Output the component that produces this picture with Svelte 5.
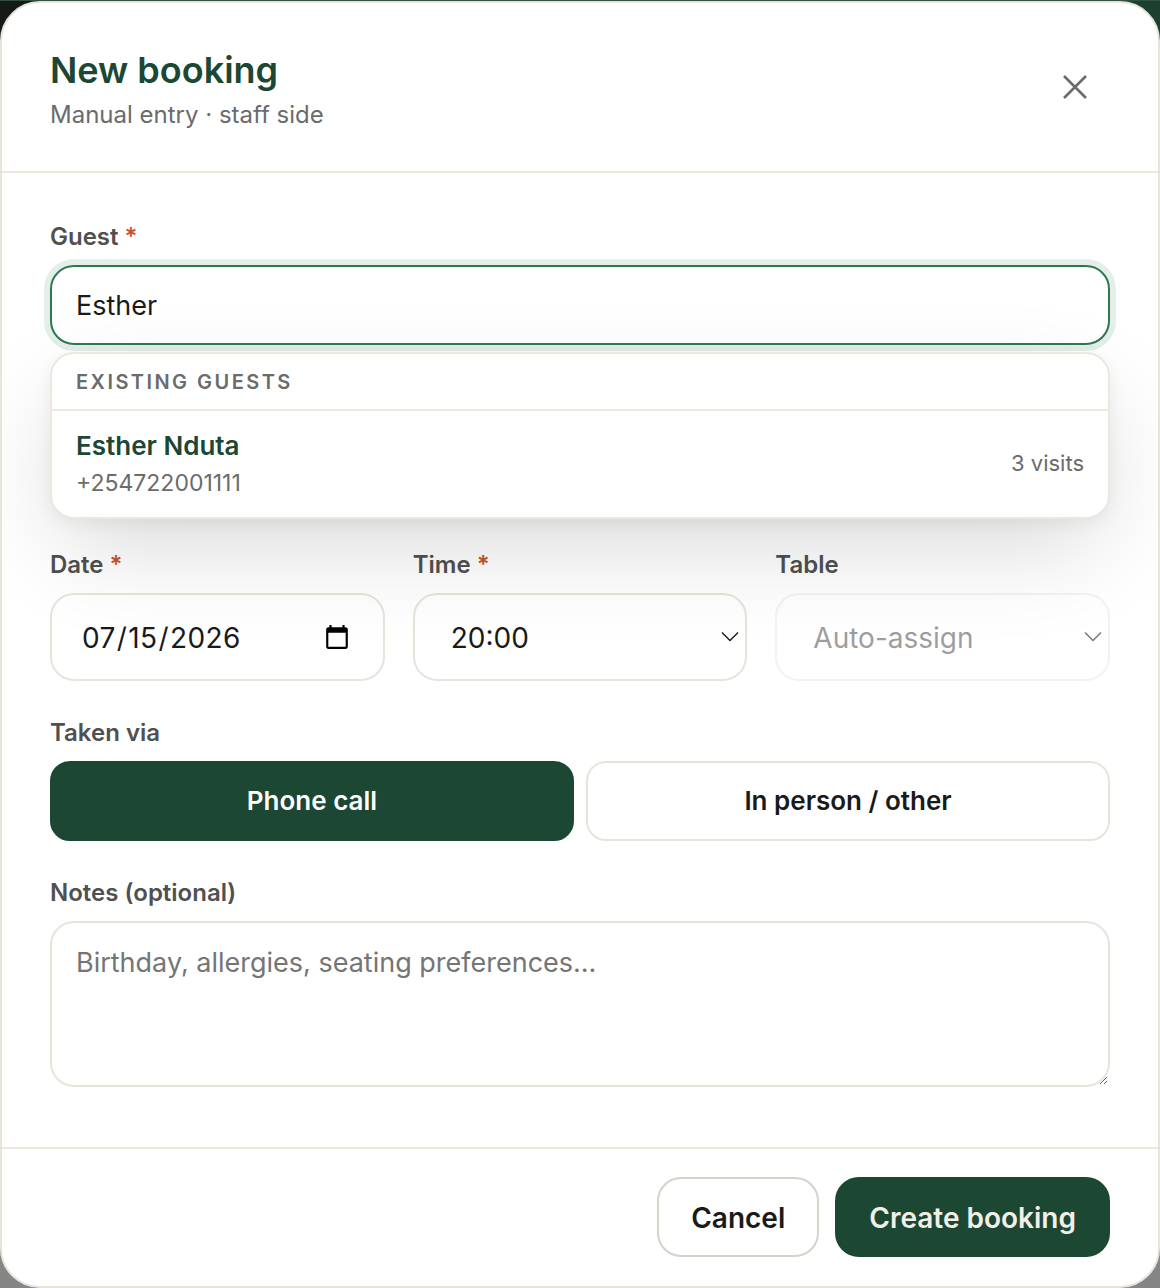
<script>
    let guest = "Esther";
    let date = "2026-07-15";
    let time = "20:00";
    let via = "phone";
    let notes = "";
</script>

<div class="modal">
    <header class="head">
        <div>
            <h2>New booking</h2>
            <p>Manual entry · staff side</p>
        </div>
        <button class="close" aria-label="Close">
            <svg width="28" height="28" viewBox="0 0 28 28" fill="none" stroke="#6b6b6b" stroke-width="2.6">
                <path d="M3 3l22 22M25 3L3 25" />
            </svg>
        </button>
    </header>

    <div class="body">
        <div class="field guest">
            <label for="guest">Guest <span class="req">*</span></label>
            <input id="guest" class="focused" type="text" bind:value={guest} />
            <div class="dropdown">
                <div class="dropdown-head">EXISTING GUESTS</div>
                <div class="match">
                    <div>
                        <div class="match-name">Esther Nduta</div>
                        <div class="match-phone">+254722001111</div>
                    </div>
                    <span class="match-visits">3 visits</span>
                </div>
            </div>
        </div>

        <div class="row3">
            <div class="field">
                <label for="date">Date <span class="req">*</span></label>
                <input id="date" class="big" type="date" bind:value={date} />
            </div>
            <div class="field">
                <label for="time">Time <span class="req">*</span></label>
                <div class="select-wrap">
                    <select id="time" class="big" bind:value={time}>
                        <option>19:30</option>
                        <option>20:00</option>
                        <option>20:30</option>
                    </select>
                    <svg class="chev" width="18" height="12" viewBox="0 0 18 12" fill="none" stroke="#1a1a1a" stroke-width="1.4"><path d="M1 1.5l8 8 8-8" /></svg>
                </div>
            </div>
            <div class="field">
                <label for="table">Table</label>
                <div class="select-wrap off">
                    <select id="table" class="big" disabled>
                        <option>Auto-assign</option>
                    </select>
                    <svg class="chev" width="18" height="12" viewBox="0 0 18 12" fill="none" stroke="#1a1a1a" stroke-width="1.4"><path d="M1 1.5l8 8 8-8" /></svg>
                </div>
            </div>
        </div>

        <div class="field">
            <span class="label">Taken via</span>
            <div class="toggle">
                <button class:active={via === "phone"} on:click={() => (via = "phone")}>Phone call</button>
                <button class:active={via === "other"} on:click={() => (via = "other")}>In person / other</button>
            </div>
        </div>

        <div class="field">
            <label for="notes">Notes (optional)</label>
            <textarea id="notes" placeholder="Birthday, allergies, seating preferences..." bind:value={notes}></textarea>
        </div>
    </div>

    <footer class="foot">
        <button class="btn ghost">Cancel</button>
        <button class="btn primary">Create booking</button>
    </footer>
</div>

<style>
    :global(body) {
        background:
            linear-gradient(#31503f, #31503f) top / 100% 1px no-repeat,
            linear-gradient(90deg, #141a18 0 50%, #1c4030 50% 100%) top / 100% 50% no-repeat,
            #858585;
        font-family: Inter, "Liberation Sans", sans-serif;
    }

    .modal {
        box-sizing: border-box;
        height: 1287px;
        margin-top: 1px;
        display: flex;
        flex-direction: column;
        background: #fff;
        border: 2px solid #e8e4dc;
        border-radius: 40px;
        overflow: hidden;
        color: #1a1a1a;
    }

    .head {
        display: flex;
        justify-content: space-between;
        align-items: flex-start;
        padding: 45px 48px 39px;
        border-bottom: 2px solid #ece8e0;
    }

    h2 {
        margin: 0;
        font-size: 36px;
        line-height: 44px;
        font-weight: 600;
        color: #1b4733;
    }

    .head p {
        margin: 6px 0 0;
        font-size: 24px;
        line-height: 34px;
        color: #6b6b6b;
    }

    .close {
        width: 44px;
        height: 44px;
        margin: 17px 13px 0 0;
        padding: 0;
        display: flex;
        align-items: center;
        justify-content: center;
        border: 0;
        background: none;
    }

    .body {
        flex: 1;
        display: flex;
        flex-direction: column;
        gap: 36px;
        padding: 48px 48px 0;
    }

    .field {
        display: flex;
        flex-direction: column;
        gap: 13px;
        min-width: 0;
    }

    .guest {
        position: relative;
        height: 292px;
    }

    label,
    .label {
        font-size: 24px;
        line-height: 31px;
        font-weight: 600;
        color: #505050;
    }

    .req {
        color: #c8552b;
    }

    input,
    select,
    textarea {
        box-sizing: border-box;
        width: 100%;
        font-family: inherit;
        color: #1a1a1a;
        background: #fff;
        border: 2px solid #e8e4dc;
        border-radius: 24px;
        outline: none;
    }

    .focused {
        height: 80px;
        padding: 0 24px;
        font-size: 27px;
        border-color: #2d7a50;
        box-shadow: 0 0 0 6px rgba(45, 122, 80, 0.12);
    }

    .big {
        height: 88px;
        padding: 2px 30px 0 29px;
        font-size: 28px;
    }

    input.big {
        letter-spacing: 0.4px;
    }

    select.big {
        appearance: none;
        padding-left: 36px;
    }

    .select-wrap {
        position: relative;
    }

    .off {
        opacity: 0.6;
    }

    .chev {
        position: absolute;
        right: 8px;
        top: 38px;
        pointer-events: none;
    }

    .dropdown {
        position: absolute;
        z-index: 5;
        left: 0;
        right: 0;
        top: 131px;
        background: #fff;
        border: 2px solid #ece8e0;
        border-radius: 24px;
        box-shadow: 0 36px 100px -12px rgba(0, 0, 0, 0.16), 0 4px 16px rgba(0, 0, 0, 0.05);
    }

    .dropdown-head {
        padding: 14px 24px 13px;
        font-size: 20px;
        line-height: 28px;
        font-weight: 600;
        letter-spacing: 2.45px;
        color: #6b6b6b;
        border-bottom: 2px solid #ece8e0;
    }

    .match {
        display: flex;
        justify-content: space-between;
        align-items: center;
        padding: 18px 24px;
    }

    .match-name {
        font-size: 26px;
        line-height: 34px;
        font-weight: 600;
        color: #1b4733;
    }

    .match-phone,
    .match-visits {
        font-size: 23px;
        line-height: 32px;
        color: #6b6b6b;
    }

    .match-phone {
        margin-top: 4px;
    }

    .match-visits {
        font-size: 22px;
        padding-bottom: 3px;
    }

    .row3 {
        display: grid;
        grid-template-columns: repeat(3, 1fr);
        gap: 28px;
    }

    .toggle {
        display: grid;
        grid-template-columns: 1fr 1fr;
        gap: 12px;
    }

    .toggle button {
        height: 80px;
        padding-bottom: 2px;
        font: 600 26px Inter, "Liberation Sans", sans-serif;
        color: #1a1a1a;
        background: #fff;
        border: 2px solid #e8e4dc;
        border-radius: 20px;
    }

    .toggle button.active {
        color: #fff;
        background: #1b4733;
        border-color: #1b4733;
    }

    textarea {
        height: 166px;
        padding: 19px 24px;
        font-size: 27px;
        line-height: 42px;
    }

    textarea::placeholder {
        color: #757575;
    }

    .foot {
        display: flex;
        justify-content: flex-end;
        gap: 16px;
        padding: 28px 48px 29px;
        border-top: 2px solid #ece8e0;
    }

    .btn {
        height: 80px;
        padding: 2px 32px 0;
        font: 600 28px Inter, "Liberation Sans", sans-serif;
        border-radius: 24px;
    }

    .ghost {
        color: #1a1a1a;
        background: #fff;
        border: 2px solid #d6d2ca;
    }

    .primary {
        color: #f2efe9;
        background: #1b4733;
        border: 2px solid #1b4733;
    }
</style>
